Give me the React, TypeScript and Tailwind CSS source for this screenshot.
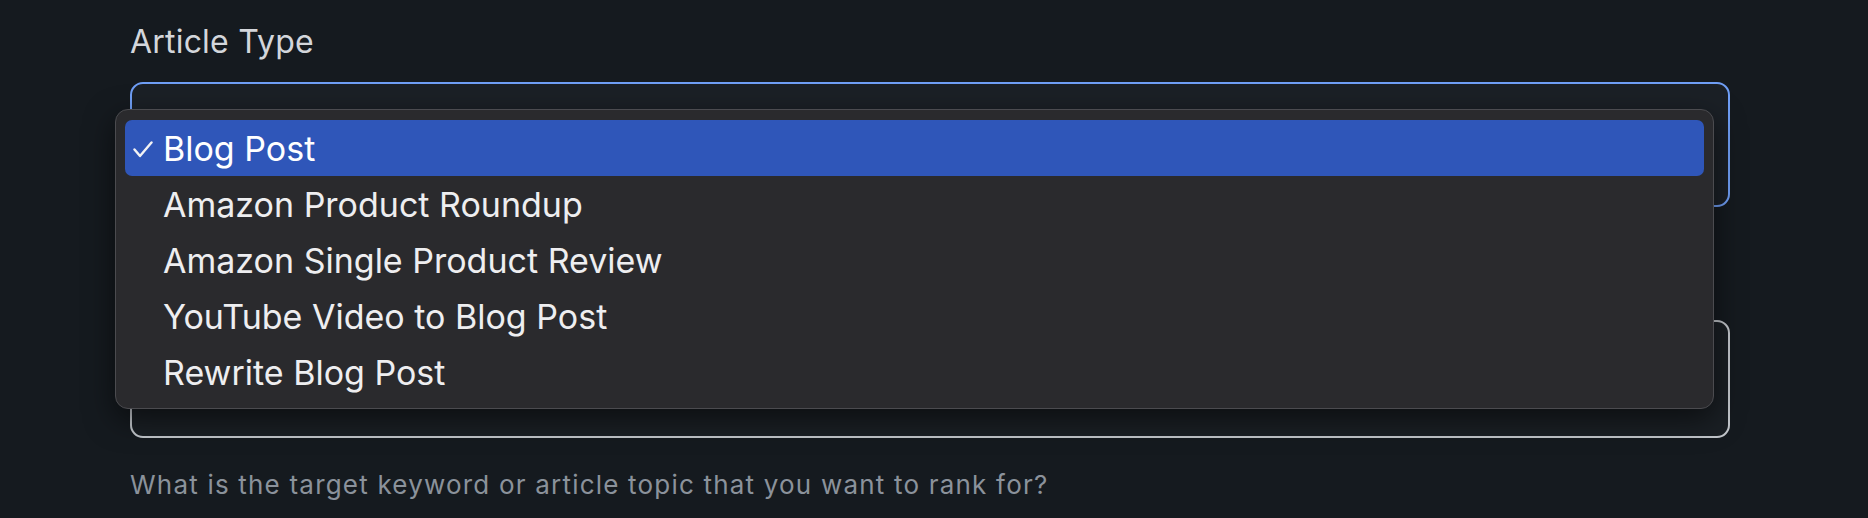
import React from 'react';

const options = [
  'Blog Post',
  'Amazon Product Roundup',
  'Amazon Single Product Review',
  'YouTube Video to Blog Post',
  'Rewrite Blog Post',
];

function Check() {
  return (
    <svg width="20" height="17" viewBox="0 0 20 17" fill="none" className="absolute left-[8px] top-[21px]">
      <path d="M1.5 8.5 L7 15 L18.5 1.5" stroke="#f2f2f4" strokeWidth="2.4" strokeLinecap="round" strokeLinejoin="round" />
    </svg>
  );
}

function ArticleTypeMenu({ selected }: { selected: string }) {
  return (
    <div className="absolute left-[115px] top-[109px] w-[1599px] rounded-[13px] border-[1.5px] border-[#4b4b4f] bg-[#2a2a2d] pt-[10px] pb-[8px] px-[9px] shadow-[0_10px_30px_rgba(0,0,0,0.55)]">
      {options.map((opt) => {
        const active = opt === selected;
        return (
          <div
            key={opt}
            className={
              active
                ? 'relative h-[56px] rounded-[7px] bg-[#2f56b9] pl-[38px] pt-[2px] text-[34px] leading-[54px] text-white'
                : 'relative h-[56px] rounded-[7px] pl-[38px] pt-[2px] text-[34px] leading-[54px] text-[#eeeef0]'
            }
          >
            {active && <Check />}
            {opt}
          </div>
        );
      })}
    </div>
  );
}

export default function App() {
  return (
    <div className="min-h-screen bg-[#151a1f] font-['Inter','Noto_Sans',sans-serif]">
      <div className="relative h-[518px] overflow-hidden pl-[130px] pt-[22px]">
        <div className="w-[1600px]">
          <label className="block h-[40px] text-[32px] leading-[40px] tracking-[0.2px] text-[#d3d6db]">Article Type</label>
          <div className="mt-[20px] h-[125px] rounded-[13px] border-[2.5px] border-[#6f9ef5] bg-[#1b2026]" />
          <div className="mt-[113px] h-[118px] rounded-[13px] border-2 border-[#c3c7cc] bg-[#1a1f24]" />
          <p className="mt-[31px] text-[26px] leading-[32px] tracking-[1.2px] text-[#8b929b]">
            What is the target keyword or article topic that you want to rank for?
          </p>
        </div>
        <ArticleTypeMenu selected="Blog Post" />
      </div>
    </div>
  );
}
